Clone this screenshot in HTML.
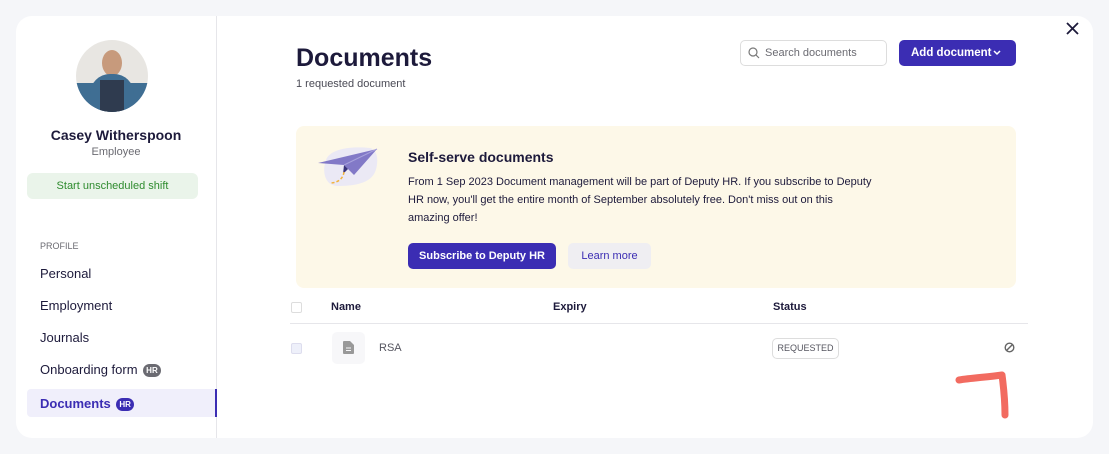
<!DOCTYPE html>
<html><head><style>
*{box-sizing:border-box;margin:0;padding:0}
body{width:1109px;height:454px;background:#f5f6f9;font-family:"Liberation Sans",sans-serif;position:relative;overflow:hidden;color:#1d1a3b}
.card{position:absolute;left:16px;top:16px;width:1077px;height:422px;background:#fff;border-radius:16px}
.abs{position:absolute}
.side{position:absolute;left:216px;top:16px;width:1px;height:422px;background:#e6e6ea}
.nav{position:absolute;left:40px;font-size:13px;color:#1d1a3b}
.hr{display:inline-block;background:#6b6b72;color:#fff;font-size:8px;font-weight:bold;border-radius:8px;padding:2px 3px;vertical-align:1px;margin-left:2px}
</style></head><body>
<div class="card"></div>
<div class="side"></div>
<div class="abs" style="left:76px;top:40px;width:72px;height:72px;border-radius:50%;overflow:hidden;background:linear-gradient(180deg,#e8e6e2 0 60%,#3f6e93 60%);">
<div class="abs" style="left:26px;top:10px;width:20px;height:26px;border-radius:50%;background:#c79a7c"></div>
<div class="abs" style="left:14px;top:34px;width:44px;height:40px;border-radius:20px 20px 0 0;background:#3f6e93"></div>
<div class="abs" style="left:24px;top:40px;width:24px;height:34px;background:#2f3b4f"></div>
</div>
<div class="abs" style="left:16px;width:200px;top:127px;text-align:center;font-weight:bold;font-size:14px">Casey Witherspoon</div>
<div class="abs" style="left:16px;width:200px;top:146px;text-align:center;font-size:11px;color:#6b6b72">Employee</div>
<div class="abs" style="left:27px;top:173px;width:171px;height:26px;background:#eaf4ea;border-radius:6px;color:#2e8b2e;font-size:11px;text-align:center;line-height:26px">Start unscheduled shift</div>
<div class="abs" style="left:40px;top:241px;font-size:9px;color:#6b6b72">PROFILE</div>
<div class="nav" style="top:266px">Personal</div>
<div class="nav" style="top:298px">Employment</div>
<div class="nav" style="top:330px">Journals</div>
<div class="nav" style="top:362px">Onboarding form <span class="hr">HR</span></div>
<div class="abs" style="left:27px;top:389px;width:190px;height:28px;background:#f0effb;border-radius:4px 0 0 4px;border-right:2px solid #3b2db3"></div>
<div class="nav" style="top:396px;color:#3b2db3;font-weight:bold">Documents <span class="hr" style="background:#3b2db3">HR</span></div>

<div class="abs" style="left:296px;top:44px;font-size:25px;font-weight:bold">Documents</div>
<div class="abs" style="left:296px;top:78px;font-size:11px;color:#4a4a55">1 requested document</div>
<div class="abs" style="left:740px;top:40px;width:147px;height:26px;border:1px solid #ddd;border-radius:5px;font-size:11px;color:#6b6b72;line-height:24px;padding-left:24px">Search documents
<svg class="abs" style="left:7px;top:6px" width="12" height="12" viewBox="0 0 12 12"><circle cx="5" cy="5" r="4" fill="none" stroke="#777" stroke-width="1.2"/><path d="M8 8l3 3" stroke="#777" stroke-width="1.2"/></svg></div>
<div class="abs" style="left:899px;top:40px;width:117px;height:26px;background:#3b2db3;border-radius:5px;color:#fff;font-size:11.5px;font-weight:bold;line-height:26px;padding-left:12px">Add document
<svg class="abs" style="left:94px;top:10px" width="8" height="6" viewBox="0 0 8 6"><path d="M1 1l3 3 3-3" fill="none" stroke="#fff" stroke-width="1.5"/></svg></div>
<svg class="abs" style="left:1066px;top:22px" width="13" height="13" viewBox="0 0 13 13"><path d="M1 1l11 11M12 1L1 12" stroke="#1d1a3b" stroke-width="1.8"/></svg>

<div class="abs" style="left:296px;top:126px;width:720px;height:162px;background:#fdf8e8;border-radius:8px"></div>
<svg class="abs" style="left:314px;top:144px" width="66" height="44" viewBox="0 0 66 44"><path d="M12 16c4-12 28-14 44-12 10 2 8 20 4 26-6 10-22 12-36 12C10 42 8 26 12 16z" fill="#ebe9f5"/><path d="M4 19L63 5 40 31 30 21z" fill="#8279c7"/><path d="M30 21l-1 9 5-5z" fill="#3a347a"/><path d="M30 21L63 5" stroke="#a8a2dc"/><path d="M30 28c-1 8-8 11-14 11" fill="none" stroke="#f2b33d" stroke-width="1.5" stroke-dasharray="3 2"/></svg>
<div class="abs" style="left:408px;top:149px;font-size:14px;font-weight:bold">Self-serve documents</div>
<div class="abs" style="left:408px;top:173px;white-space:nowrap;font-size:11px;line-height:18px">From 1 Sep 2023 Document management will be part of Deputy HR. If you subscribe to Deputy<br>HR now, you'll get the entire month of September absolutely free. Don't miss out on this<br>amazing offer!</div>
<div class="abs" style="left:408px;top:243px;width:148px;height:26px;background:#3b2db3;border-radius:5px;color:#fff;font-size:11px;font-weight:bold;text-align:center;line-height:26px">Subscribe to Deputy HR</div>
<div class="abs" style="left:568px;top:243px;width:83px;height:26px;background:#efeef2;border-radius:5px;color:#3b2db3;font-size:11px;text-align:center;line-height:26px">Learn more</div>

<div class="abs" style="left:291px;top:302px;width:11px;height:11px;border:1px solid #ddd;border-radius:2px"></div>
<div class="abs" style="left:331px;top:301px;font-size:11px;font-weight:bold">Name</div>
<div class="abs" style="left:553px;top:301px;font-size:11px;font-weight:bold">Expiry</div>
<div class="abs" style="left:773px;top:301px;font-size:11px;font-weight:bold">Status</div>
<div class="abs" style="left:290px;top:323px;width:738px;height:1px;background:#e6e6ea"></div>
<div class="abs" style="left:291px;top:343px;width:11px;height:11px;border:1px solid #dde;background:#eef0fa;border-radius:2px"></div>
<div class="abs" style="left:332px;top:332px;width:33px;height:32px;background:#f7f7f9;border-radius:5px"></div>
<svg class="abs" style="left:343px;top:341px" width="11" height="13" viewBox="0 0 11 13"><path d="M0 1a1 1 0 011-1h6l4 4v8a1 1 0 01-1 1H1a1 1 0 01-1-1z" fill="#999"/><path d="M3 7h5M3 9.5h5" stroke="#f7f7f9" stroke-width="1"/></svg>
<div class="abs" style="left:379px;top:342px;font-size:11px;color:#55555f">RSA</div>
<div class="abs" style="left:772px;top:338px;width:67px;height:21px;border:1px solid #ddd;border-radius:5px;font-size:9px;color:#55555f;text-align:center;line-height:19px">REQUESTED</div>
<svg class="abs" style="left:1004px;top:342px" width="11" height="11" viewBox="0 0 11 11"><circle cx="5.5" cy="5.5" r="4.3" fill="none" stroke="#666" stroke-width="1.4"/><path d="M2.5 8.5l6-6" stroke="#666" stroke-width="1.4"/></svg>
<svg class="abs" style="left:950px;top:365px" width="65" height="55" viewBox="0 0 65 55"><path d="M9 15C22 13 38 12 52 10c2 15 3 28 3 40" fill="none" stroke="#f26b60" stroke-width="7" stroke-linecap="round" stroke-linejoin="round"/></svg>
</body></html>
